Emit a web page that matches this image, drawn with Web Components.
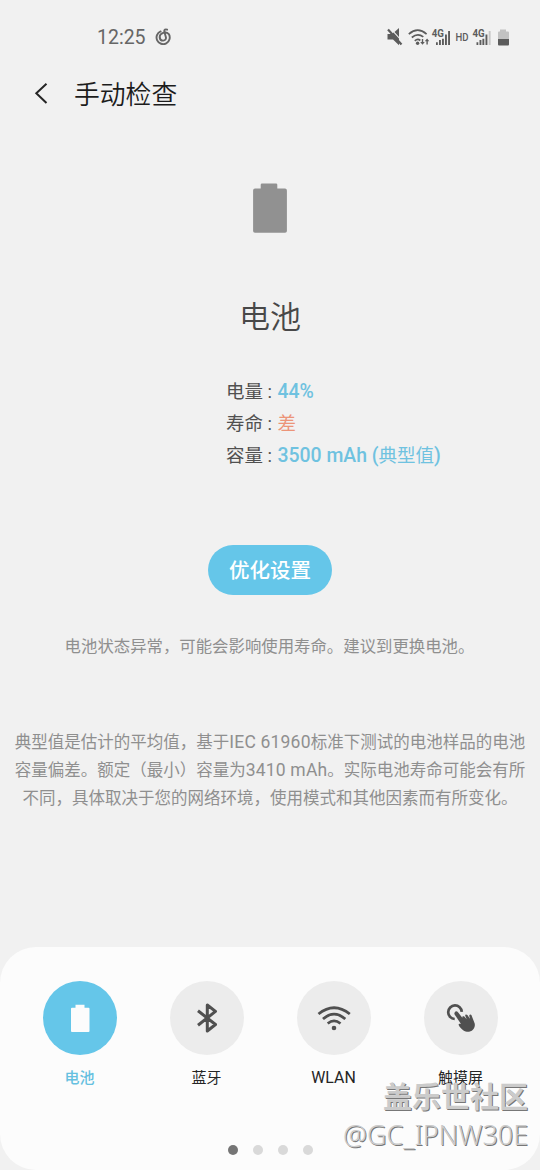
<!DOCTYPE html>
<html lang="zh-CN">
<head>
<meta charset="utf-8">
<title>手动检查</title>
<style>
html,body{margin:0;padding:0}
body{width:540px;height:1170px;overflow:hidden;background:#f1f1f1;font-family:Roboto,"Noto Sans CJK SC",sans-serif;color:#505050}
</style>
</head>
<body>
<battery-check-page></battery-check-page>
<script>
const define = (name, html) => customElements.define(name, class extends HTMLElement {
  constructor() {
    super();
    this.attachShadow({ mode: 'open' }).innerHTML = html;
  }
});

define('status-bar', `
<style>
:host{display:flex;height:74px;box-sizing:border-box;padding:0 30px 0 97px;align-items:center;color:#666}
.time{font-size:19.500px;line-height:24px;width:49px;padding-top:2px;white-space:nowrap}
.music{margin-left:9px}
svg{display:block;flex:none}
.right{margin-left:auto;display:block}
text{font-family:Roboto,sans-serif;font-weight:700;fill:#5c5c5c}
</style>
<span class="time">12:25</span>
<svg class="music" width="17" height="18" viewBox="0 0 17 18" fill="none" stroke="#666" stroke-width="1.900" stroke-linecap="round"><path d="M5.600 3.400A6.600 6.600 0 1 0 13.800 6.100C12.600 4.700 10.400 4.100 8.200 4.800C5.900 5.500 4.500 7.300 4.700 9.500C5 11.700 6.600 12.700 8.200 12.600C10.200 12.400 11.300 10.900 10.900 9.200L9.300 3.600C9 1.700 10.500 1 12.100 1.700"/></svg>
<svg class="right" width="124" height="24" viewBox="386 24 124 24">
  <path d="M387.500 33h4.500l1.500-1.500 5.500 6V44.300l-6-5.800h-5.500zM394.500 31l4.500-3.900v9z" fill="#5c5c5c"/>
  <path d="M388 28.600L401.500 43.500" stroke="#5c5c5c" stroke-width="2.200"/>
  <g fill="none" stroke="#5c5c5c" stroke-width="1.700"><path d="M408.800 33.100Q417.700 25.200 426.600 33.100M411.800 36.500Q417.700 31.400 423.300 35.900M414.800 39.800Q417.700 37.200 420.300 39.500"/></g>
  <circle cx="417.600" cy="42.200" r="1.700" fill="#5c5c5c"/>
  <path d="M421.800 38h1.400v3h1.600l-2.300 2.800-2.300-2.800h1.600zM426.400 43.500h1.400v-3.300h1.500l-2.200-2.800-2.300 2.800h1.600z" fill="#5c5c5c"/>
  <text x="431.800" y="36.300" font-size="10.500" textLength="12.200" lengthAdjust="spacingAndGlyphs">4G</text>
  <path d="M436 41.200h1.800V44H436zM439 39h1.900v5H439zM442 37.800h1.900V44H442zM445 33.500h1.900V44H445zM448.100 30h1.900v14h-1.900z" fill="#5c5c5c"/>
  <text x="455.500" y="40.200" font-size="10.500" textLength="13" lengthAdjust="spacingAndGlyphs" style="font-weight:500">HD</text>
  <text x="472.500" y="36.300" font-size="10.500" textLength="12.200" lengthAdjust="spacingAndGlyphs">4G</text>
  <path d="M476.500 41.200h1.800V44h-1.800zM479.500 39h1.900v5h-1.900zM482.400 37.800h1.900V44h-1.900zM485.500 33.500h1.900V44h-1.900z" fill="#5c5c5c"/>
  <path d="M488.700 30h1.900v14h-1.900z" fill="#c6c6c6"/>
  <path d="M500 28.500h6v2h2a1 1 0 0 1 1 1V38h-11v-6.500a1 1 0 0 1 1-1h1z" fill="#c2c2c2"/>
  <path d="M498 38h11v5.500a1 1 0 0 1-1 1h-9a1 1 0 0 1-1-1z" fill="#5c5c5c"/>
</svg>`);

define('title-bar', `
<style>
:host{display:flex;height:40px;align-items:center;padding-left:34px;color:#1c1c1c}
svg{display:block;flex:none}
h1{margin:1px 0 0 26px;font-size:25.800px;font-weight:350;line-height:40px;white-space:nowrap}
</style>
<svg width="14" height="22" viewBox="0 0 14 22" fill="none" stroke="#252525" stroke-width="2"><path d="M12.500 .8L2.300 10.200L12.500 20"/></svg>
<h1><slot></slot></h1>`);

define('info-row', `
<style>
:host{display:flex;height:32px;line-height:32px;font-size:18.500px;white-space:nowrap;color:#505050}
.label{width:51.500px}
.value{color:#6fc2e0;font-weight:500;font-size:19.400px}
:host([warn]) .value{color:#ec9478;font-weight:400;font-size:18.500px}
</style>
<span class="label"><slot name="label"></slot></span><span class="value"><slot></slot></span>`);

define('battery-summary', `
<style>
:host{display:flex;flex-direction:column;align-items:center;padding-top:69px}
svg{display:block}
h2{margin:59px 0 0;font-size:31px;line-height:50px;font-weight:350;color:#484848}
.info{align-self:flex-start;margin:33px 0 0 226px;display:grid}
.reg{font-weight:400;font-size:18.500px}
</style>
<svg width="36" height="51" viewBox="0 0 36 51"><path d="M10 .5h14a1.300 1.300 0 0 1 1.300 1.300V5.500H33a1.900 1.900 0 0 1 1.900 1.900V47.600A1.900 1.900 0 0 1 33 49.700H3a1.900 1.900 0 0 1-1.900-2V7.400A1.900 1.900 0 0 1 3 5.500h5.700V1.800A1.300 1.300 0 0 1 10 .5z" fill="#919191"/></svg>
<h2>电池</h2>
<div class="info">
<info-row><span slot="label">电量 :</span>44%</info-row>
<info-row warn><span slot="label">寿命 :</span>差</info-row>
<info-row><span slot="label">容量 :</span>3500 mAh (<span class="reg">典型值</span>)</info-row>
</div>`);

define('pill-button', `
<style>
:host{display:block}
button{display:block;width:124px;height:50px;padding:2px 0 0;border:0;border-radius:25px;background:#65c6e9;color:#fff;font:500 20.500px/48px Roboto,"Noto Sans CJK SC",sans-serif}
</style>
<button><slot></slot></button>`);

define('note-text', `
<style>
:host{display:block;text-align:center;font-size:16.500px;line-height:28px;color:#8f8f8f;white-space:nowrap}
</style>
<slot></slot>`);

define('check-item', `
<style>
:host{display:flex;flex-direction:column;align-items:center;width:74px;color:#252525}
.disc{width:74px;height:74px;border-radius:50%;background:#ececec;display:grid;place-items:center}
.label{font-size:15px;line-height:22px;margin-top:11.500px;white-space:nowrap}
:host([latin]) .label{font-size:15.900px}
:host([active]) .disc{background:#65c6e9}
:host([active]) .label{color:#65c0e0;font-weight:500}
</style>
<div class="disc"><slot name="icon"></slot></div>
<span class="label"><slot></slot></span>`);

define('page-dots', `
<style>
:host{display:flex;gap:15px;justify-content:center}
i{width:10px;height:10px;border-radius:50%;background:#d9d9d9}
i:first-of-type{background:#757575}
</style>
<i></i><i></i><i></i><i></i>`);

define('check-dock', `
<style>
:host{display:flex;flex-direction:column;height:223px;box-sizing:border-box;background:#fcfcfc;border-radius:36px;padding:34px 42.500px 15px}
.items{display:flex;justify-content:space-between}
page-dots{margin-top:auto}
svg{display:block}
</style>
<div class="items">
<check-item active><svg slot="icon" width="40" height="40"><path d="M15.500 6.800h9v3h4a1 1 0 0 1 1 1V33a1 1 0 0 1-1 1H12a1 1 0 0 1-1-1V10.800a1 1 0 0 1 1-1h3.500z" fill="#fcfcfc"/></svg>电池</check-item>
<check-item><svg slot="icon" width="40" height="40" fill="none" stroke="#505050" stroke-width="3" stroke-linejoin="round"><path d="M11 12.800L28.500 26.500L20.300 33V7L28.500 13.400L11 27.200"/></svg>蓝牙</check-item>
<check-item latin><svg slot="icon" width="40" height="40" fill="none" stroke="#505050" stroke-width="2.800"><path d="M4.500 16Q20 3.500 35.800 16M9 21Q20 11.300 31.300 21M13.700 25.500Q20 20.200 26.500 25.500"/><circle cx="20" cy="30" r="2.300" fill="#505050" stroke="none"/></svg>WLAN</check-item>
<check-item><svg slot="icon" width="40" height="40"><path d="M20.800 13.800A6.800 6.800 0 1 0 13.700 21" fill="none" stroke="#505050" stroke-width="2.700"/><path d="M13.800 14.200C12.600 16 14.100 17.400 15 18.500L20 26C18.500 25.300 17.300 25.600 17.700 27C19 30 22.500 33.400 26 33.800C31.500 34.100 34.600 29.500 33.700 25.500L30.400 17C29.400 15.700 28.100 16.700 28.300 18L29 20.800L26.400 17.100C25 15.800 23.700 16.900 24.400 18.300L25.700 21.200L23.300 18.600C22 17.700 20.800 18.700 21.500 20L17.200 14.600C16 13.100 14.700 12.900 13.800 14.200z" fill="#505050"/></svg>触摸屏</check-item>
</div>
<page-dots></page-dots>`);

define('community-mark', `
<style>
:host{position:absolute;right:12px;bottom:16px;display:grid;justify-items:end;color:#cbcbcb;white-space:nowrap;text-shadow:1px 1px 0 #777}
b{font:700 29px/38px "Noto Sans CJK SC",sans-serif;margin-bottom:2px}
span{font:300 26.900px/38px "Noto Sans",sans-serif}
</style>
<b>盖乐世社区</b><span>@GC_IPNW30E</span>`);

define('battery-check-page', `
<style>
:host{position:relative;display:flex;flex-direction:column;width:540px;height:1170px}
pill-button{align-self:center;margin-top:72.500px}
.status{margin-top:38px;font-size:16.400px;padding-right:1px}
.disclaimer{margin-top:68px}
.latin{font-size:17.500px;letter-spacing:.2px;line-height:1}
check-dock{margin-top:auto}
</style>
<status-bar></status-bar>
<title-bar>手动检查</title-bar>
<battery-summary></battery-summary>
<pill-button>优化设置</pill-button>
<note-text class="status">电池状态异常，可能会影响使用寿命。建议到更换电池。</note-text>
<note-text class="disclaimer">典型值是估计的平均值，基于<span class="latin">IEC 61960</span>标准下测试的电池样品的电池<br>容量偏差。额定（最小）容量为<span class="latin">3410 mAh</span>。实际电池寿命可能会有所<br>不同，具体取决于您的网络环境，使用模式和其他因素而有所变化。</note-text>
<check-dock></check-dock>
<community-mark></community-mark>`);
</script>
</body>
</html>
